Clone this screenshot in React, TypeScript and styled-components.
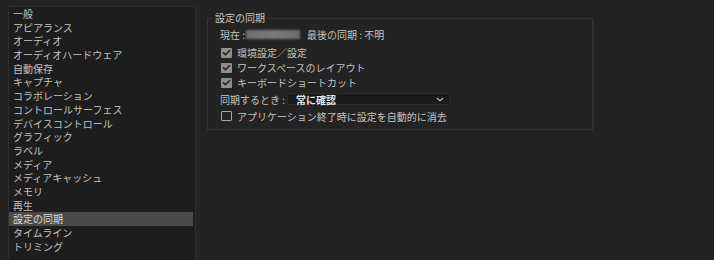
import React from "react";
import styled, { createGlobalStyle } from "styled-components";

const Global = createGlobalStyle`
  html, body { margin: 0; padding: 0; background: #232323; overflow: hidden; }
  body { font-family: "Noto Sans CJK JP", "Noto Sans", sans-serif; color: #c6c6c6; }
`;

const Page = styled.div`
  display: flex;
  align-items: flex-start;
  width: 714px;
  height: 260px;
  overflow: hidden;
  background: #232323;
`;

const Sidebar = styled.ul`
  list-style: none;
  margin: 6px 0 0 8px;
  padding: 0 2px 0 0;
  width: 188px;
  height: 254px;
  box-sizing: border-box;
  background: #1d1d1d;
  border: 1px solid #2f2f2f;
  border-bottom: none;
`;

const Item = styled.li<{ $selected?: boolean }>`
  height: 13.7px;
  line-height: 13.7px;
  padding-left: 4px;
  font-size: 10px;
  white-space: nowrap;
  color: ${(p) => (p.$selected ? "#dcdcdc" : "#c2c2c2")};
  background: ${(p) => (p.$selected ? "#4a4a4a" : "transparent")};
`;

const Main = styled.div`
  padding: 12px 0 0 11px;
`;

const Group = styled.fieldset`
  margin: 0;
  width: 386px;
  box-sizing: border-box;
  border: 1px solid #333333;
  padding: 3px 12px 5px 12px;
  box-shadow: 5px 0 0 -4px #2a2a2a;
`;

const Legend = styled.legend`
  font-size: 10px;
  line-height: 12px;
  padding: 0 3px;
  margin-left: -8px;
  color: #c6c6c6;
`;

const Row = styled.div<{ $gap?: number }>`
  display: flex;
  align-items: center;
  height: 15px;
  font-size: 10px;
  white-space: pre;
  color: #c2c2c2;
  margin-top: ${(p) => p.$gap ?? 0}px;
`;

const Blur = styled.span`
  display: inline-block;
  width: 54px;
  height: 9px;
  margin: 0 7px 0 1px;
  background: linear-gradient(90deg, #6e6e6e, #7a7a7a 50%, #6c6c6c);
  filter: blur(1.2px);
`;

const Box = styled.span<{ $checked?: boolean }>`
  display: inline-flex;
  align-items: center;
  justify-content: center;
  width: 11px;
  height: 10px;
  box-sizing: border-box;
  margin: 0 5px 0 1px;
  border-radius: 1px;
  background: ${(p) => (p.$checked ? "#8e8e8e" : "transparent")};
  border: ${(p) => (p.$checked ? "none" : "1px solid #a8a8a8")};
`;

const Select = styled.div`
  display: flex;
  align-items: center;
  justify-content: space-between;
  width: 163px;
  height: 12px;
  box-sizing: border-box;
  margin-left: 2px;
  padding: 0 5px 0 8px;
  background: #1b1b1b;
  border: 1px solid #2c2c2c;
  border-radius: 2px;
  font-weight: 700;
  color: #e6e6e6;
`;

const items = [
  "一般",
  "アピアランス",
  "オーディオ",
  "オーディオハードウェア",
  "自動保存",
  "キャプチャ",
  "コラボレーション",
  "コントロールサーフェス",
  "デバイスコントロール",
  "グラフィック",
  "ラベル",
  "メディア",
  "メディアキャッシュ",
  "メモリ",
  "再生",
  "設定の同期",
  "タイムライン",
  "トリミング",
];

const Check = () => (
  <svg width="9" height="7" viewBox="0 0 9 7">
    <path d="M1 3.4 L3.5 5.6 L8 1.2" fill="none" stroke="#262626" strokeWidth="1.6" />
  </svg>
);

const Chevron = () => (
  <svg width="8" height="5" viewBox="0 0 8 5">
    <path d="M1 1 L4 3.8 L7 1" fill="none" stroke="#cfcfcf" strokeWidth="1.1" />
  </svg>
);

export default function App() {
  return (
    <Page>
      <Global />
      <Sidebar>
        {items.map((t) => (
          <Item key={t} $selected={t === "設定の同期"}>
            {t}
          </Item>
        ))}
      </Sidebar>
      <Main>
        <Group>
          <Legend>設定の同期</Legend>
          <Row>
            {"現在 :"}
            <Blur />
            {"最後の同期 : 不明"}
          </Row>
          <Row $gap={3}>
            <Box $checked>
              <Check />
            </Box>
            環境設定／設定
          </Row>
          <Row>
            <Box $checked>
              <Check />
            </Box>
            ワークスペースのレイアウト
          </Row>
          <Row>
            <Box $checked>
              <Check />
            </Box>
            キーボードショートカット
          </Row>
          <Row $gap={1.5}>
            {"同期するとき :"}
            <Select>
              常に確認
              <Chevron />
            </Select>
          </Row>
          <Row $gap={2}>
            <Box />
            アプリケーション終了時に設定を自動的に消去
          </Row>
        </Group>
      </Main>
    </Page>
  );
}
